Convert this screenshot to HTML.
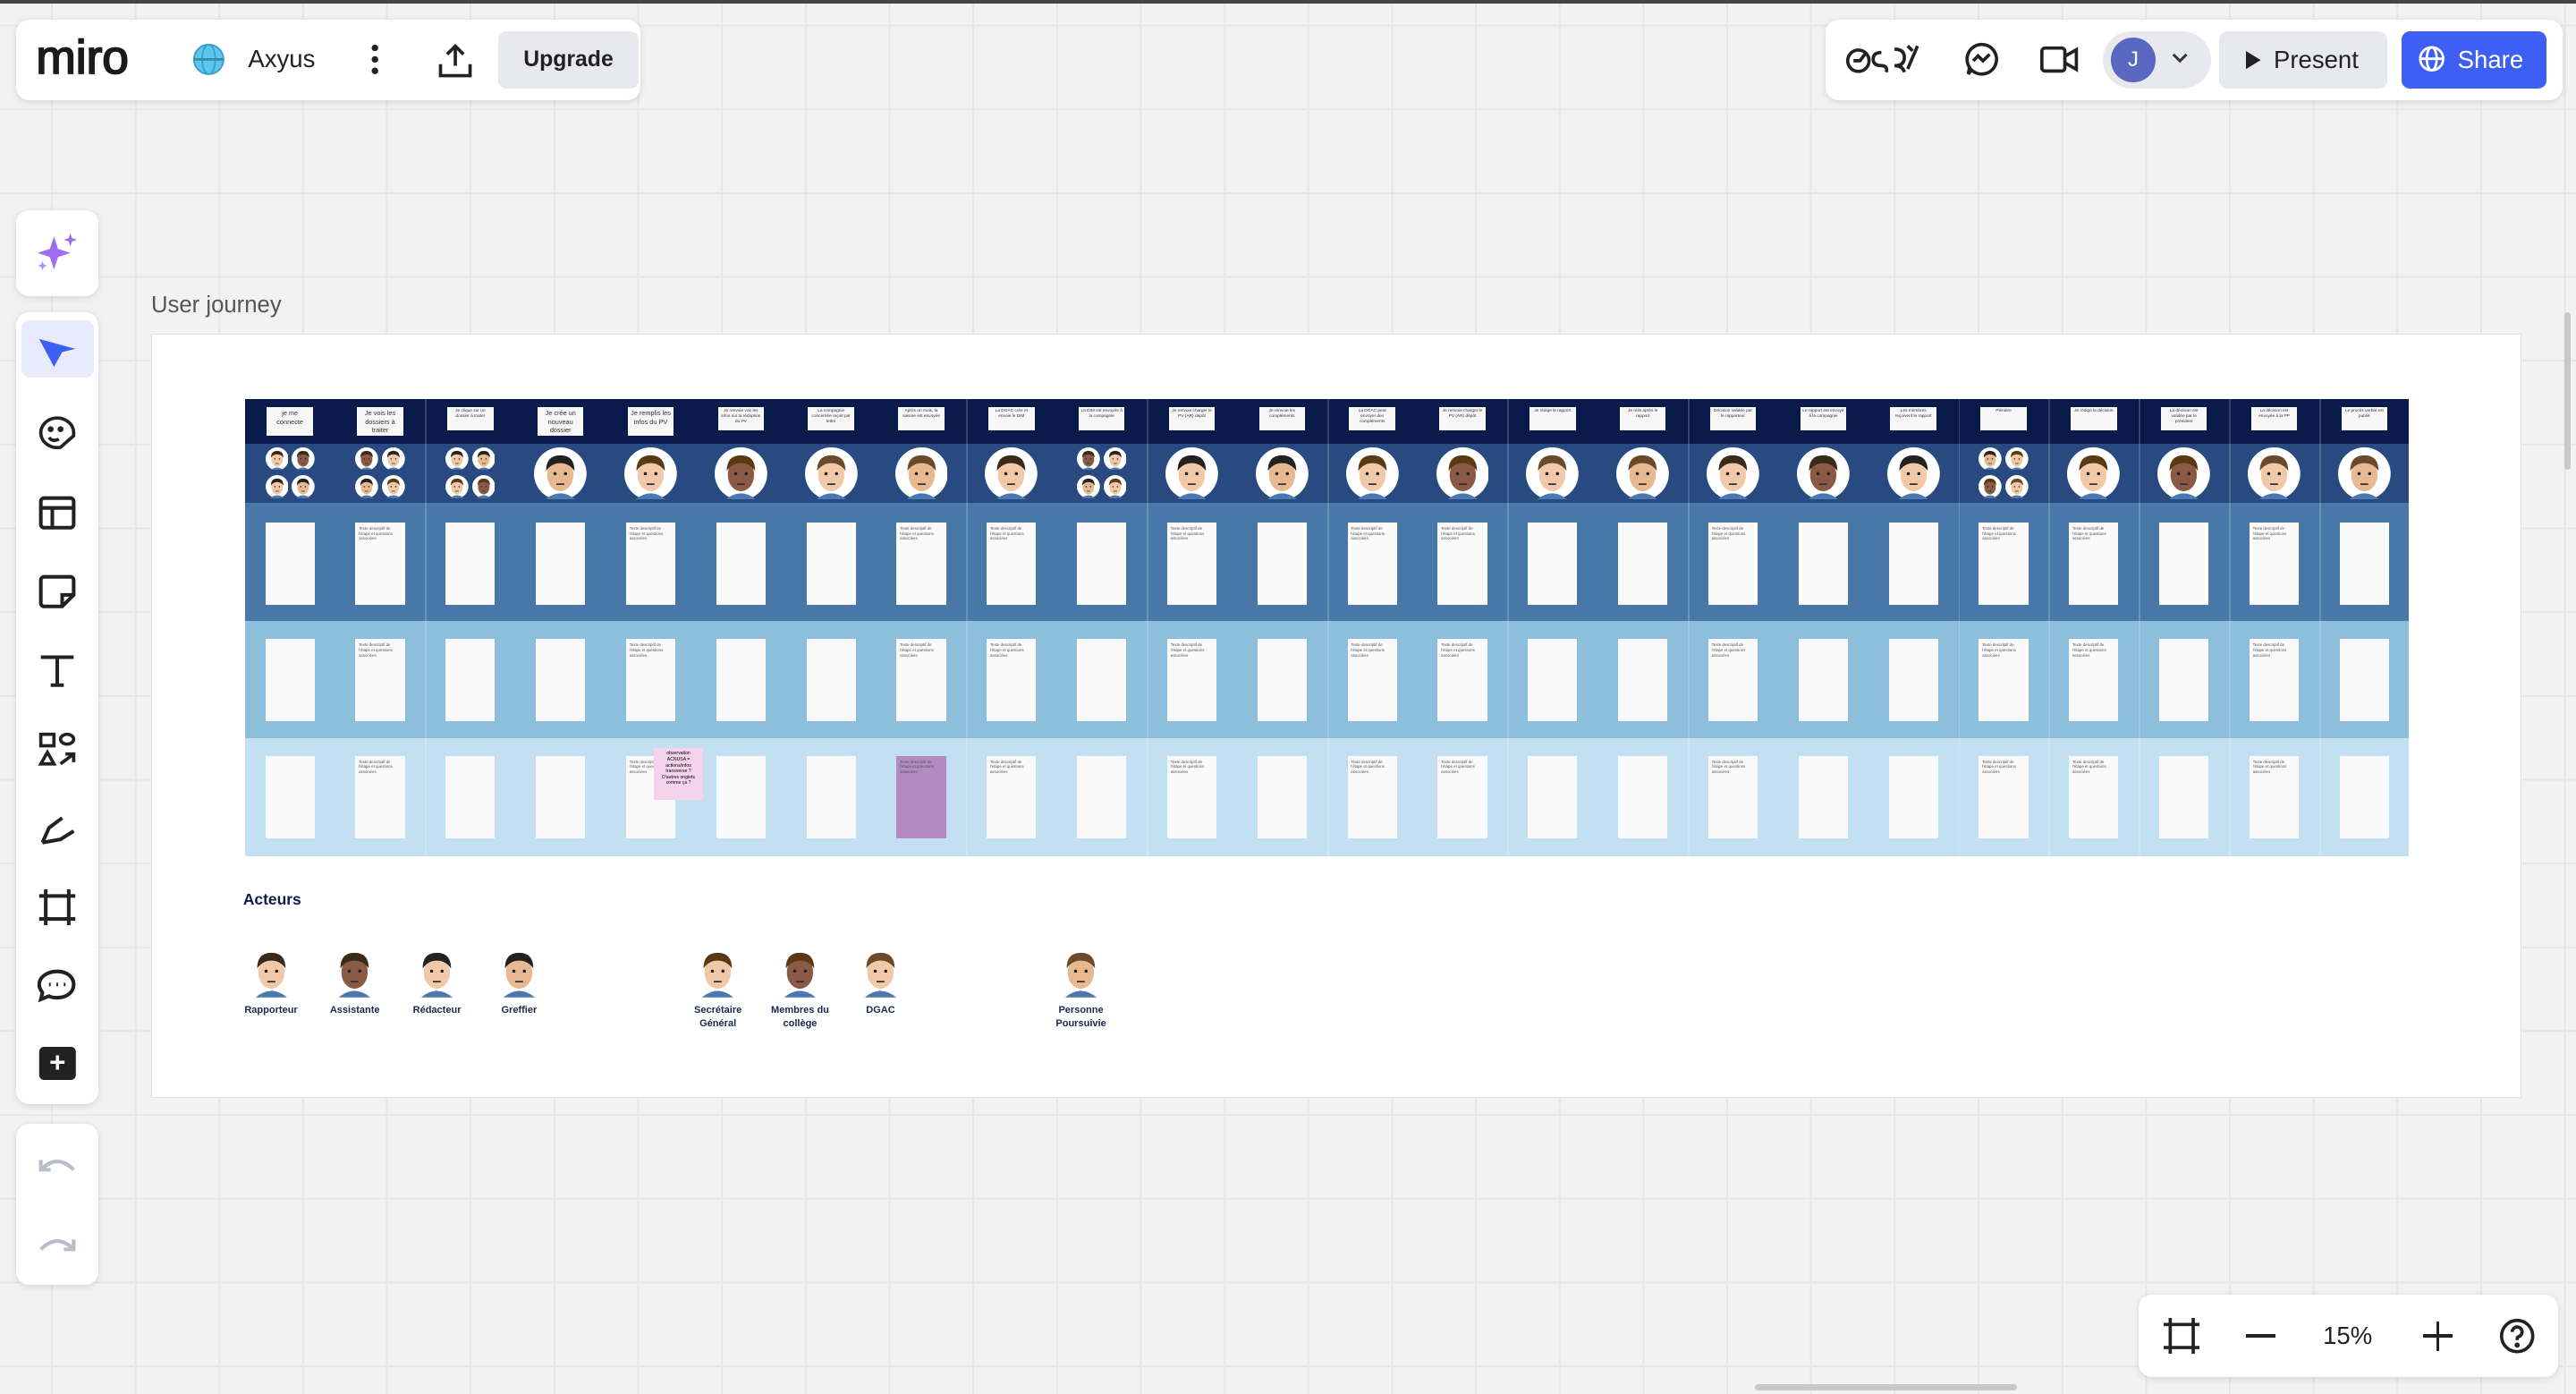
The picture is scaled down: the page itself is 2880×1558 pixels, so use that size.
<!DOCTYPE html>
<html><head><meta charset="utf-8"><style>
*{margin:0;padding:0;box-sizing:border-box}
html,body{width:2880px;height:1558px;overflow:hidden}
body{background:#f2f2f2;font-family:"Liberation Sans",sans-serif}
#s{position:absolute;left:0;top:0;width:1568px;height:848px;zoom:1.8367;
background-color:#f2f2f2;
background-image:linear-gradient(#e6e6e6 1px,transparent 1px),linear-gradient(90deg,#e6e6e6 1px,transparent 1px);
background-size:51px 51px;background-position:31px 15px}
.a{position:absolute}
.panel{position:absolute;background:#fff;border-radius:8px;box-shadow:0 1px 4px rgba(0,0,0,.12)}
.ic{position:absolute;left:50%;transform:translateX(-50%)}
.hd{position:absolute;background:#f7f7f7;font-size:4px;line-height:5px;text-align:center;color:#333;overflow:hidden;padding:1px}
.card{position:absolute;width:30px;height:50px;background:#fafafa;font-size:2.4px;line-height:3.2px;color:#555;padding:2px;overflow:hidden}
.lbl{font-size:6px;color:#1a2850;font-weight:bold;text-align:center;position:absolute;width:50px;line-height:8px}
</style></head><body><div id="s">
<div class="a" style="left:0;top:0;width:1568px;height:2px;background:#444"></div>

<div class="panel" style="left:10px;top:12px;width:380px;height:49px">
 <div class="a" style="left:12px;top:8px;font-size:29px;font-weight:normal;-webkit-text-stroke:1px #1a1a1a;letter-spacing:0px;color:#1a1a1a;line-height:30px">miro</div>
 <svg class="a" style="left:107px;top:14px" width="20" height="20" viewBox="0 0 20 20"><circle cx="10" cy="10" r="9" fill="#5bc6ef" stroke="#3a9ec6"/><ellipse cx="10" cy="10" rx="4" ry="9" fill="none" stroke="#3a9ec6"/><line x1="1" y1="10" x2="19" y2="10" stroke="#3a8aaa" stroke-width="1.5"/></svg>
 <div class="a" style="left:141px;top:15px;font-size:15px;color:#222">Axyus</div>
 <svg class="a" style="left:213px;top:14px" width="10" height="22"><circle cx="5" cy="3" r="2" fill="#222"/><circle cx="5" cy="10" r="2" fill="#222"/><circle cx="5" cy="17" r="2" fill="#222"/></svg>
 <svg class="a" style="left:255px;top:13px" width="24" height="24" viewBox="0 0 24 24" fill="none" stroke="#222" stroke-width="2"><path d="M12 15V3M7 8l5-5 5 5M3 14v7h18v-7"/></svg>
 <div class="a" style="left:293px;top:7px;width:86px;height:35px;background:#e8e9ef;border-radius:5px;font-size:13.5px;font-weight:bold;color:#222;text-align:center;line-height:35px">Upgrade</div>
</div>

<div class="panel" style="left:1111px;top:12px;width:449px;height:49px">
 <svg class="a" style="left:12px;top:12px" width="48" height="24" viewBox="0 0 48 24" fill="none" stroke="#222" stroke-width="2"><circle cx="8" cy="13" r="6.5"/><path d="M5 13h4l3-4"/><path d="M22 8q-5 0-5 4t5 4q4 0 3 4"/><path d="M30 6q6 0 6 5t-6 5q5 0 6 4M38 4l3 3M44 4l-6 14"/></svg>
 <svg class="a" style="left:84px;top:13px" width="22" height="22" viewBox="0 0 22 22" fill="none" stroke="#222" stroke-width="2"><path d="M11 2a9 9 0 1 1-6 15.5L3 20l.8-4A9 9 0 0 1 11 2z"/><path d="M6 12l3-3 3 3 4-4"/></svg>
 <svg class="a" style="left:131px;top:15px" width="24" height="18" viewBox="0 0 24 18" fill="none" stroke="#222" stroke-width="2"><rect x="1" y="2" width="14" height="14" rx="2"/><path d="M15 7l7-4v12l-7-4"/></svg>
 <div class="a" style="left:169px;top:7px;width:66px;height:35px;background:#e8e9ef;border-radius:18px"></div>
 <div class="a" style="left:174px;top:11px;width:27px;height:27px;background:#5b68c2;border-radius:50%;color:#fff;font-size:13px;text-align:center;line-height:27px">J</div>
 <svg class="a" style="left:211px;top:20px" width="10" height="8"><path d="M1 1l4 4 4-4" fill="none" stroke="#333" stroke-width="1.6"/></svg>
 <div class="a" style="left:240px;top:7px;width:102px;height:35px;background:#e8e9ef;border-radius:5px;font-size:15px;color:#222;line-height:35px;padding-left:33px">Present</div>
 <svg class="a" style="left:256px;top:19px" width="10" height="11"><path d="M0 0l9 5.5L0 11z" fill="#222"/></svg>
 <div class="a" style="left:351px;top:7px;width:88px;height:35px;background:#3d5ff5;border-radius:5px;font-size:15px;color:#fff;line-height:35px;padding-left:34px">Share</div>
 <svg class="a" style="left:361px;top:16px" width="16" height="16" viewBox="0 0 16 16" fill="none" stroke="#fff" stroke-width="1.5"><circle cx="8" cy="8" r="7"/><ellipse cx="8" cy="8" rx="3" ry="7"/><path d="M1 8h14"/></svg>
</div>

<div class="panel" style="left:10px;top:128px;width:50px;height:52px">
 <svg class="ic" style="top:12px" width="28" height="28" viewBox="0 0 28 28"><path d="M12 4l2.5 7.5L22 14l-7.5 2.5L12 24l-2.5-7.5L2 14l7.5-2.5z" fill="#9d6cf0"/><path d="M22 2l1 3 3 1-3 1-1 3-1-3-3-1 3-1z" fill="#9d6cf0"/><path d="M5 19l.8 2 2 .8-2 .8-.8 2-.8-2-2-.8 2-.8z" fill="#b08cf5"/></svg>
</div>
<div class="panel" style="left:10px;top:190px;width:50px;height:482px">
 <div class="a" style="left:3px;top:5px;width:44px;height:35px;background:#e7ebfb;border-radius:5px"></div>
 <svg class="ic" style="top:15px" width="24" height="20" viewBox="0 0 24 20"><path d="M1 1l22 6-8 2-5 9z" fill="#3d5ff5"/></svg>
 <svg class="ic" style="top:63px" width="24" height="22" viewBox="0 0 24 22" fill="none" stroke="#222" stroke-width="2"><path d="M22 10a10 9 0 1 0-8 9l8-7z"/><path d="M7 13q2 3 6 1"/><circle cx="8" cy="8" r=".8" fill="#222"/><circle cx="14" cy="8" r=".8" fill="#222"/></svg>
 <svg class="ic" style="top:111px" width="24" height="22" viewBox="0 0 24 22" fill="none" stroke="#222" stroke-width="2.2"><rect x="2" y="2" width="20" height="18" rx="2"/><path d="M2 8h20M9 8v12"/></svg>
 <svg class="ic" style="top:159px" width="24" height="22" viewBox="0 0 24 22" fill="none" stroke="#222" stroke-width="2.2"><path d="M4 2h16a2 2 0 0 1 2 2v9l-7 7H4a2 2 0 0 1-2-2V4a2 2 0 0 1 2-2z"/><path d="M22 13h-7v7"/></svg>
 <svg class="ic" style="top:207px" width="24" height="22" viewBox="0 0 24 22" fill="none" stroke="#222" stroke-width="2.2"><path d="M2 3h20M12 3v17M8 20h8"/></svg>
 <svg class="ic" style="top:255px" width="24" height="22" viewBox="0 0 24 22" fill="none" stroke="#222" stroke-width="2"><rect x="2" y="2" width="8" height="7"/><path d="M2 20l4-7 4 7z"/><ellipse cx="18" cy="5" rx="4" ry="3"/><path d="M14 20l8-6M17 14h5v5"/></svg>
 <svg class="ic" style="top:303px" width="24" height="22" viewBox="0 0 24 22" fill="none" stroke="#222" stroke-width="2.2"><path d="M3 20l4-9 8-6M3 20l11-2 8-5"/></svg>
 <svg class="ic" style="top:351px" width="24" height="22" viewBox="0 0 24 22" fill="none" stroke="#222" stroke-width="2.2"><path d="M1 4h22M1 18h22M5 0v22M19 0v22"/></svg>
 <svg class="ic" style="top:399px" width="24" height="22" viewBox="0 0 24 22" fill="none" stroke="#222" stroke-width="2.2"><path d="M12 2c6 0 10 3.5 10 8s-4 8-10 8c-2 0-4-.3-5-1l-5 2 1-4c-1-1.5-2-3-2-5 0-4.5 5-8 11-8z"/><path d="M7 10h1M11.5 10h1M16 10h1"/></svg>
 <div class="ic" style="top:447px;width:22px;height:20px;background:#222;border-radius:3px;color:#fff;font-size:17px;font-weight:bold;text-align:center;line-height:20px">+</div>
</div>
<div class="panel" style="left:10px;top:684px;width:50px;height:98px">
 <svg class="ic" style="top:18px" width="24" height="14" viewBox="0 0 24 14" fill="none" stroke="#b8bccb" stroke-width="2.2"><path d="M2 10q10-10 20 0M2 4v6h6"/></svg>
 <svg class="ic" style="top:66px" width="24" height="14" viewBox="0 0 24 14" fill="none" stroke="#b8bccb" stroke-width="2.2"><path d="M22 10q-10-10-20 0M22 4v6h-6"/></svg>
</div>

<div class="panel" style="left:1302px;top:788px;width:255px;height:50px">
 <svg class="a" style="left:15px;top:14px" width="22" height="22" viewBox="0 0 22 22" fill="none" stroke="#222" stroke-width="2"><path d="M0 4h22M0 18h22M4 0v22M18 0v22"/></svg>
 <div class="a" style="left:65px;top:24px;width:18px;height:2px;background:#222"></div>
 <div class="a" style="left:112px;top:16px;font-size:15px;color:#222">15%</div>
 <div class="a" style="left:173px;top:24px;width:18px;height:2px;background:#222"></div>
 <div class="a" style="left:181px;top:16px;width:2px;height:18px;background:#222"></div>
 <svg class="a" style="left:219px;top:14px" width="22" height="22" viewBox="0 0 22 22" fill="none" stroke="#222" stroke-width="2"><circle cx="11" cy="11" r="9.5"/><path d="M8 8.5a3 3 0 1 1 4 2.8c-1 .4-1 1-1 2.2"/><circle cx="11" cy="16.5" r=".6" fill="#222"/></svg>
</div>

<div class="a" style="left:1561px;top:190px;width:4px;height:96px;background:#c8c8c8;border-radius:2px"></div>
<div class="a" style="left:1068px;top:842px;width:160px;height:4px;background:#c8c8c8;border-radius:2px"></div>

<div class="a" style="left:92px;top:178px;font-size:14px;color:#555">User journey</div>
<div class="a" style="left:92px;top:203px;width:1443px;height:465px;background:#fff;border:1px solid #e2e2e2"></div>

<div class="a" id="tbl" style="left:149px;top:243px;width:1317px;height:278px">
 <div class="a" style="left:0;top:0;width:1317px;height:27px;background:#0a1a4a"></div>
 <div class="a" style="left:0;top:27px;width:1317px;height:36px;background:#284a80"></div>
 <div class="a" style="left:0;top:63px;width:1317px;height:72px;background:#4878a8"></div>
 <div class="a" style="left:0;top:135px;width:1317px;height:71px;background:#8dbedb"></div>
 <div class="a" style="left:0;top:206px;width:1317px;height:72px;background:#c3e0f2"></div>
</div>

<div class="a" style="left:148px;top:542px;font-size:9.5px;font-weight:bold;color:#0a1a4a">Acteurs</div>
<div id="act"></div>
</div>
<script>
var L=["je me connecte","Je vois les dossiers à traiter","Je clique sur un dossier à traiter","Je crée un nouveau dossier","Je remplis les infos du PV","Je renvoie voir les infos sur la réception du PV","La compagnie concernée reçoit par lettre","Après un mois, la saisine est envoyée","La DGAC crée et envoie le DIM","La DIM est envoyée à la compagnie","Je renvoie charger le PV (AR) dépôt","Je renvoie les compléments","La DGAC peut envoyer des compléments","Je renvoie charger le PV (AR) dépôt","Je rédige le rapport","Je relis après le rapport","Décision validée par le rapporteur","Le rapport est envoyé à la compagnie","Les membres reçoivent le rapport","Plénière","Je rédige la décision","La décision est validée par le président","La décision est envoyée à la PP","Le procès verbal est publié"];
var T=document.getElementById('tbl'),h='';
var skins=['#f2c9a8','#8a5a44','#f2c9a8','#e8b890'],hairs=['#3a2a1a','#222','#5a3a14','#6a4a2a'];
function av(x,y,r,k,nobg){var s=skins[k%4],hc=hairs[(k>>1)%4];return '<svg class="a" style="left:'+(x-r)+'px;top:'+(y-r)+'px" width="'+2*r+'" height="'+2*r+'" viewBox="0 0 20 20">'+(nobg?'':'<circle cx="10" cy="10" r="10" fill="#fff"/>')+'<path d="M4 20q6-5 12 0z" fill="#4a78b0"/><ellipse cx="10" cy="10.5" rx="5" ry="6.2" fill="'+s+'"/><path d="M4.6 9q0-6 5.4-6t5.4 6q-2-3-5.4-3t-5.4 3z" fill="'+hc+'"/><circle cx="8" cy="10" r=".6" fill="#222"/><circle cx="12" cy="10" r=".6" fill="#222"/><path d="M8.5 14h3" stroke="#333" stroke-width=".6"/></svg>';}
var four=[0,1,2,9,19],purple=7;
for(var i=0;i<24;i++){var x=i*54.9,cx=x+27.5;
 if([2,8,10,12,14,16,19,20,21,22,23].indexOf(i)>=0)h+='<div class="a" style="left:'+x+'px;top:0;width:1px;height:278px;background:rgba(255,255,255,.18)"></div>';
 var big=i<2||i==3||i==4;
 h+='<div class="hd" style="left:'+(cx-14)+'px;top:5px;width:28px;height:'+(big?17:14)+'px;font-size:'+(big?4:2.6)+'px;line-height:'+(big?5:3.2)+'px">'+L[i]+'</div>';
 if(four.indexOf(i)>=0){h+=av(cx-8,36,7,i)+av(cx+8,36,7,i+1)+av(cx-8,53,7,i+2)+av(cx+8,53,7,i+3);}
 else h+=av(cx,45,16,i);
 for(var r=0;r<3;r++){var bg=(r==2&&i==purple)?'#b38ac1':'#fafafa';
  var t=(i%3==1||i%4==0&&i>0)?'Texte descriptif de l\'étape et questions associées':'';
  h+='<div class="card" style="left:'+(cx-15)+'px;top:'+(75+r*71)+'px;background:'+bg+'">'+t+'</div>';}
}
h+='<div class="a" style="left:249px;top:212px;width:30px;height:32px;background:#f6d3ec;font-size:2.8px;line-height:3.6px;text-align:center;padding:2px">observation ACNUSA = actions/infos transverse ? D\'autres onglets comme ça ?</div>';
T.innerHTML+=h;
var A=[["Rapporteur",165],["Assistante",216],["Rédacteur",266],["Greffier",316],["Secrétaire Général",437],["Membres du collège",487],["DGAC",536],["Personne Poursuivie",658]],a='';
A.forEach(function(p,k){a+=av(p[1],591,16,k,true);a+='<div class="lbl" style="left:'+(p[1]-25)+'px;top:611px">'+p[0]+'</div>';});
document.getElementById('act').innerHTML=a;
</script>
</body></html>
